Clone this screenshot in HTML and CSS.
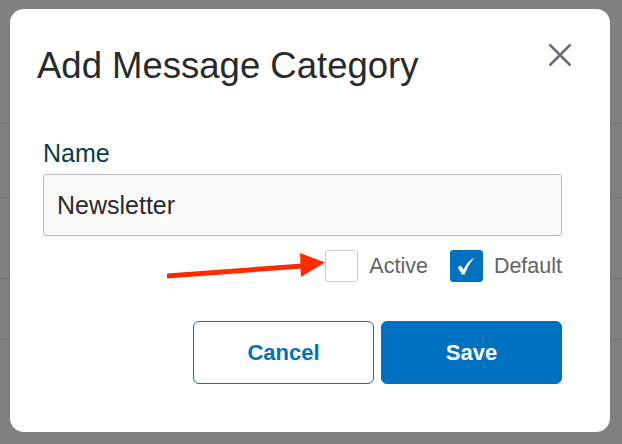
FILE: index.html
```html
<!DOCTYPE html>
<html>
<head>
<meta charset="utf-8">
<link rel="stylesheet" href="styles.css">
</head>
<body>
<div class="backdrop">
  <div class="bg-row r1"></div>
  <div class="bg-row r2"></div>
  <div class="bg-row r3"></div>
  <div class="bg-row r4"></div>
</div>
<div class="modal">
  <div class="header">
    <h1 class="title">Add Message Category</h1>
    <button class="close" aria-label="Close">
      <svg width="24" height="24" viewBox="0 0 24 24"><path d="M1.5 1.5 L22.5 22.5 M22.5 1.5 L1.5 22.5" stroke="#6c6c7c" stroke-width="2.6" fill="none"/></svg>
    </button>
  </div>
  <label class="label">Name</label>
  <div class="input">Newsletter</div>
  <div class="checks">
    <span class="box"></span>
    <span class="check-label">Active</span>
    <span class="box checked">
      <svg width="20" height="20" viewBox="0 0 20 20"><path d="M1.8 11.6 L4.8 9.6 L7.6 13.4 C10.2 8 13.6 4.2 18.6 1.6 C14.6 6 11.2 11.6 8.6 18.6 L6 18.6 Z" fill="#fff"/></svg>
    </span>
    <span class="check-label">Default</span>
  </div>
  <div class="actions">
    <button class="btn btn-outline">Cancel</button>
    <button class="btn btn-primary">Save</button>
  </div>
</div>
<svg class="arrow" width="622" height="444" viewBox="0 0 622 444">
  <line x1="167" y1="276" x2="303" y2="266" stroke="#ff2a00" stroke-width="5"/>
  <polygon points="300,253 325,262.5 301,277" fill="#ff2a00"/>
</svg>
</body>
</html>
```
FILE: styles.css
```css
* { box-sizing: border-box; }
html, body { margin: 0; padding: 0; }
body {
  width: 622px;
  height: 444px;
  background: #808080;
  font-family: "Liberation Sans", Arial, sans-serif;
  overflow: hidden;
  position: relative;
}
.backdrop { display: flex; flex-direction: column; }
.bg-row { border-bottom: 1px solid #727272; }
.r1 { height: 124px; }
.r2 { height: 74px; }
.r3 { height: 81px; }
.r4 { height: 61px; }

.modal {
  position: absolute;
  left: 10px;
  top: 9px;
  width: 600px;
  height: 423px;
  background: #fff;
  border-radius: 14px;
  padding: 35px 48px 48px 33px;
  display: flex;
  flex-direction: column;
}
.header {
  display: flex;
  justify-content: space-between;
  align-items: flex-start;
  height: 43px;
}
.title {
  margin: 0 0 0 -6px;
  font-size: 36.5px;
  line-height: 43px;
  font-weight: normal;
  color: #2a2a2a;
}
.close {
  margin: -1px -10px 0 0;
  padding: 0;
  border: 0;
  background: none;
  width: 24px;
  height: 24px;
  display: flex;
}
.label {
  margin-top: 52px;
  font-size: 25px;
  line-height: 28px;
  color: #073c4c;
}
.input {
  margin-top: 7px;
  height: 62px;
  border: 1px solid #b9b9b9;
  border-radius: 3px;
  background: #f9f9f9;
  padding-left: 13px;
  display: flex;
  align-items: center;
  font-size: 25px;
  color: #2b2b2b;
}
.checks {
  margin-top: 14px;
  height: 32px;
  display: flex;
  justify-content: flex-end;
  align-items: center;
}
.box {
  width: 33px;
  height: 32px;
  border: 1px solid #cfcfcf;
  border-radius: 3px;
  background: #fff;
  display: flex;
  align-items: center;
  justify-content: center;
}
.box.checked {
  background: #0070c0;
  border-color: #0070c0;
  margin-left: 22px;
}
.check-label {
  margin-left: 11px;
  font-size: 21.5px;
  color: #646464;
}
.actions {
  margin-top: 39px;
  display: flex;
  justify-content: flex-end;
  gap: 7px;
}
.btn {
  width: 181px;
  height: 63px;
  border-radius: 6px;
  font-family: "Liberation Sans", Arial, sans-serif;
  font-weight: bold;
  font-size: 22px;
  cursor: pointer;
}
.btn-outline {
  background: #fff;
  border: 1px solid #0070c0;
  color: #0070c0;
}
.btn-primary {
  background: #0070c0;
  border: 1px solid #0070c0;
  color: #fff;
}
.arrow {
  position: absolute;
  left: 0;
  top: 0;
  pointer-events: none;
}
```
